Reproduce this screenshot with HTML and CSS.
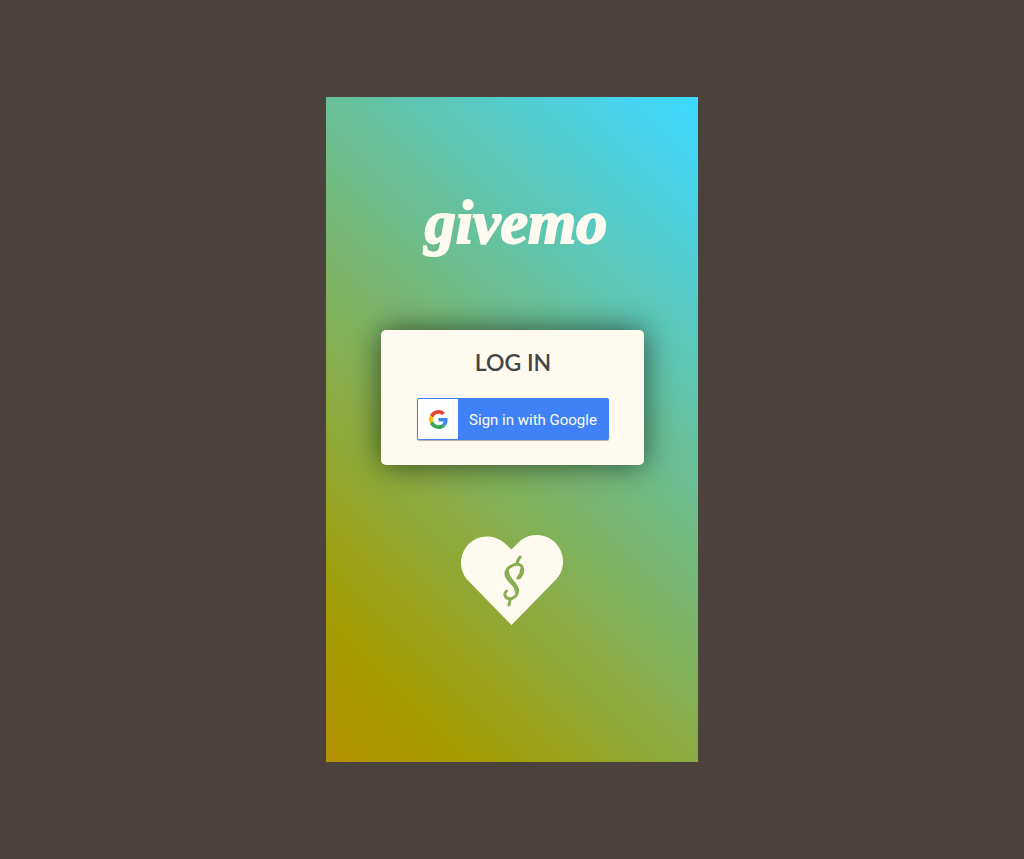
FILE: index.html
```
<!DOCTYPE html>
<html lang="en">
<head>
<meta charset="utf-8">
<meta name="viewport" content="width=device-width, initial-scale=1">
<title>givemo</title>
<link rel="stylesheet" href="styles.css">
</head>
<body>
<main class="screen">
  <h1 class="brand">givemo</h1>
  <section class="card">
    <h2 class="card-title">LOG IN</h2>
    <button class="google" type="button">
      <span class="google-tile">
        <svg class="google-logo" viewBox="0 0 48 48" aria-hidden="true">
          <path fill="#ea4335" d="M24 9.5c3.54 0 6.71 1.22 9.21 3.6l6.85-6.85C35.9 2.38 30.47 0 24 0 14.62 0 6.51 5.38 2.56 13.22l7.98 6.19C12.43 13.72 17.74 9.5 24 9.5z"/>
          <path fill="#4285f4" d="M46.98 24.55c0-1.57-.15-3.09-.38-4.55H24v9.02h12.94c-.58 2.96-2.26 5.48-4.78 7.18l7.73 6c4.51-4.18 7.09-10.36 7.09-17.65z"/>
          <path fill="#fbbc05" d="M10.53 28.59c-.48-1.45-.76-2.99-.76-4.59s.27-3.14.76-4.59l-7.98-6.19C.92 16.46 0 20.12 0 24c0 3.88.92 7.54 2.56 10.78l7.97-6.19z"/>
          <path fill="#34a853" d="M24 48c6.480 0 11.930-2.130 15.890-5.810l-7.730-6c-2.150 1.450-4.920 2.300-8.160 2.300-6.260 0-11.570-4.220-13.470-9.910l-7.980 6.190C6.510 42.620 14.620 48 24 48z"/>
        </svg>
      </span>
      <span class="google-label">Sign in with Google</span>
    </button>
  </section>
  <svg class="heart" viewBox="0 0 102 90" aria-hidden="true">
    <path class="heart-shape" d="M50.500 14.500L56.500 8.500C61.500 3 68 0 75.500 0C90.500 0 102 12 102 26.500C102 34 99 40.500 94.500 45L50.500 90L7.500 46C3 41.500 0 35 0 28C0 13.500 11.500 1.500 26 1.500C33 1.500 39.500 4 44.500 9Z"/>
    <path class="heart-mark" stroke-width="3" d="M59 22Q56.500 25 56 29M49.300 64L48 70"/>
    <path class="heart-mark" stroke-width="3" d="M57 43C62 40 63 33 60 30.500C56 27.500 46 31 45 38C44 46 56.500 49 56.500 56C56.500 61 51.500 64.500 47.500 63.500C43.500 62.500 42.800 58.500 45.500 56"/>
    <path class="heart-mark" stroke-width="4.500" d="M46 37C45.500 45 55.500 48 55.800 56"/>
    <path class="heart-mark" stroke-width="4" d="M58 42.500Q61 39 60.800 35"/>
  </svg>
</main>
</body>
</html>
```
FILE: styles.css
```
* {
  box-sizing: border-box;
}

body {
  margin: 0;
  min-height: 100vh;
  display: flex;
  align-items: center;
  justify-content: center;
  background: #4b423d;
  font-family: Lato, "Open Sans", sans-serif;
}

.screen {
  width: 100%;
  max-width: 372px;
  padding: 88px 24px 137px;
  display: flex;
  flex-direction: column;
  align-items: center;
  gap: 70px;
  background: linear-gradient(45deg, #b49000 0%, #a59c00 14%, #3fd8ff 98%);
}

.brand {
  margin: 0;
  padding-left: 8px;
  color: #fffaf0;
  font: italic 700 62px/75px "Liberation Serif", serif;
  -webkit-text-stroke: 2px #fffaf0;
}

.card {
  width: 100%;
  max-width: 263px;
  padding: 16px 24px 25px 26px;
  display: flex;
  flex-direction: column;
  align-items: center;
  gap: 20px;
  border-radius: 5px;
  background: #fffaf0;
  box-shadow: 0 0 30px rgba(0, 0, 0, 0.6);
}

.card-title {
  margin: 0;
  color: #444;
  font-size: 23px;
  font-weight: 600;
  line-height: 32px;
}

.google {
  width: 192px;
  height: 42px;
  padding: 1px;
  display: flex;
  align-items: stretch;
  border: 0;
  border-radius: 2px;
  background: #3f82f8;
  box-shadow: 0 1px 1px rgba(0, 0, 0, 0.3);
  color: #fffaf0;
  font: 400 15px/20px Roboto, sans-serif;
  cursor: pointer;
}

.google-tile {
  width: 40px;
  display: flex;
  align-items: center;
  justify-content: center;
  border-radius: 1px;
  background: #fff;
}

.google-logo {
  width: 19px;
  height: 19px;
}

.google-label {
  flex: 1;
  align-self: center;
  padding-top: 2px;
  text-align: center;
  white-space: nowrap;
}

.heart {
  width: 102px;
  height: 90px;
}

.heart-shape {
  fill: #fffaf0;
}

.heart-mark {
  fill: none;
  stroke: #8aad55;
  stroke-linecap: round;
}
```
